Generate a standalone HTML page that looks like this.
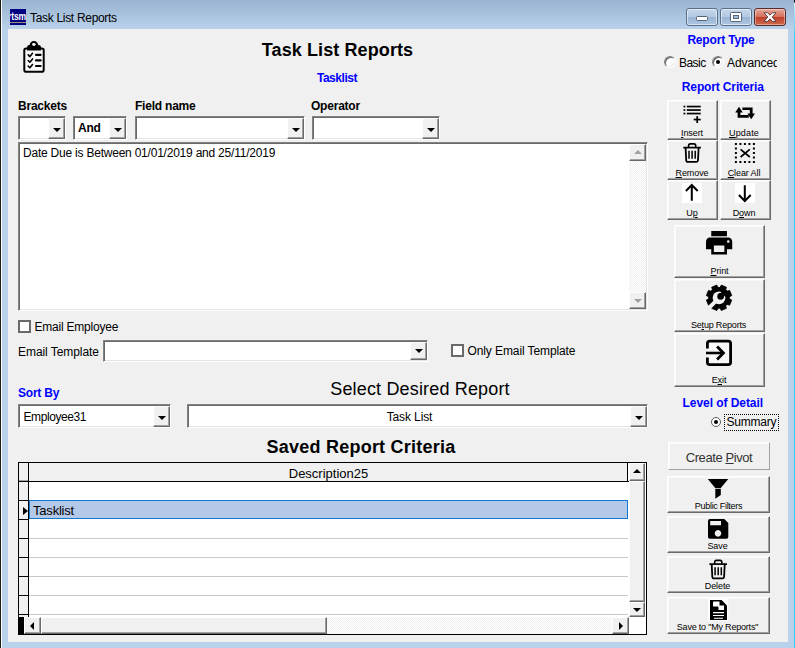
<!DOCTYPE html>
<html>
<head>
<meta charset="utf-8">
<title>Task List Reports</title>
<style>
html,body{margin:0;padding:0;}
body{width:795px;height:648px;overflow:hidden;position:relative;background:#b9d1ea;font-family:"Liberation Sans",sans-serif;font-size:12px;color:#000;}
.abs,.abs *{box-sizing:border-box;}
.abs{position:absolute;}
#frame{left:0;top:0;width:795px;height:648px;background:#b9d1ea;}
#titlebar{left:0;top:0;width:795px;height:29px;background:linear-gradient(to bottom,#99b4d1 0%,#b9d1ea 100%);}
#edgeL{left:0;top:0;width:1px;height:648px;background:#1a1a1a;}
#edgeL2{left:1px;top:0;width:1px;height:648px;background:#fff;}
#edgeR{left:794px;top:0;width:1px;height:648px;background:linear-gradient(to bottom,#000 0,#000 2px,#c8f6fd 3px,#7fe0f6 18px,#34cdf2 40px,#34cdf2 100%);}
#client{left:8px;top:29px;width:780px;height:613px;background:#f0f0f0;}
.lbl{white-space:nowrap;line-height:14px;letter-spacing:-0.22px;}
.b{font-weight:bold;}
.blue{color:#0000ff;}
.combo{background:#fff;border:1px solid;border-color:#828282 #fff #fff #828282;box-shadow:inset 1px 1px 0 #696969, inset -1px -1px 0 #e3e3e3;}
.cbtn{position:absolute;right:0;top:1px;bottom:0;width:17px;background:#f0f0f0;border:1px solid;border-color:#fff #696969 #696969 #fff;box-shadow:inset -1px -1px 0 #a0a0a0;}
.cbtn:after{content:"";position:absolute;left:50%;top:50%;margin:-1px 0 0 -4px;border:4px solid transparent;border-top-color:#000;border-bottom-width:0;width:0;height:0;}
.cbtn.e:after{margin-top:-2px;}
.btn{background:#f0f0f0;border:1px solid;border-color:#fff #696969 #696969 #fff;box-shadow:inset -1px -1px 0 #a0a0a0, inset 1px 1px 0 #f8f8f8;text-align:center;font-size:9px;}
.btn .t{position:absolute;left:0;right:0;bottom:0px;line-height:12px;white-space:nowrap;letter-spacing:-0.1px;}
.btn svg{position:absolute;}
u{text-decoration:underline;text-decoration-thickness:1px;text-underline-offset:1px;}
.chk{width:13px;height:13px;background:#fff;border:2px solid #6a6a6a;}
.radio{width:12px;height:12px;border-radius:50%;background:#fff;border:1px solid;border-color:#808080 #fff #fff #808080;box-shadow:inset 1px 1px 0 #606060, inset -1px -1px 0 #e8e8e8;}
.radio.on:after{content:"";position:absolute;left:3px;top:3px;width:4px;height:4px;border-radius:50%;background:#000;}
.sbtn{background:#f0f0f0;border:1px solid;border-color:#fff #696969 #696969 #fff;box-shadow:inset -1px -1px 0 #a0a0a0;}
.ar{position:absolute;left:50%;top:50%;width:0;height:0;border:4px solid transparent;}
.ar.up{margin:-3px 0 0 -4px;border-bottom-color:#000;border-top-width:0;}
.ar.dn{margin:-2px 0 0 -4px;border-top-color:#000;border-bottom-width:0;}
.ar.lf{margin:-4px 0 0 -3px;border-right-color:#000;border-left-width:0;}
.ar.rt{margin:-4px 0 0 -2px;border-left-color:#000;border-right-width:0;}
.ar.g.up{border-bottom-color:#a0a0a0;}
.ar.g.dn{border-top-color:#a0a0a0;}
</style>
</head>
<body>
<div class="abs" id="frame"></div>
<div class="abs" id="titlebar"></div>
<div class="abs" id="edgeL"></div>
<div class="abs" id="edgeL2"></div>
<div class="abs" id="edgeR"></div>
<!-- app icon -->
<div class="abs" style="left:10px;top:9px;width:16px;height:16px;background:#000080;overflow:hidden;">
  <div class="abs" style="left:-2px;top:2px;color:#fff;font-size:11px;font-weight:bold;line-height:11px;letter-spacing:-0.2px;transform:scaleX(0.78);transform-origin:0 0;white-space:nowrap;">rtsm!</div>
  <div class="abs" style="left:0;top:13px;width:16px;height:1px;background:#9a8f7a;"></div>
</div>
<div class="abs lbl" style="left:30px;top:10px;font-size:12px;line-height:16px;letter-spacing:-0.31px;">Task List Reports</div>
<!-- caption buttons -->
<div class="abs" id="bmin" style="left:686px;top:8px;width:32px;height:18px;border:1px solid #5a6f8c;border-radius:3px;background:linear-gradient(to bottom,#c5d6ea 0%,#b4c9e2 48%,#9ab5d5 52%,#adc5e0 100%);box-shadow:inset 0 0 0 1px rgba(255,255,255,.55);">
  <div class="abs" style="left:9px;top:7px;width:12px;height:5px;background:#fff;border:1px solid #56627a;border-radius:1.5px;"></div>
</div>
<div class="abs" id="bmax" style="left:720px;top:8px;width:32px;height:18px;border:1px solid #5a6f8c;border-radius:3px;background:linear-gradient(to bottom,#c5d6ea 0%,#b4c9e2 48%,#9ab5d5 52%,#adc5e0 100%);box-shadow:inset 0 0 0 1px rgba(255,255,255,.55);">
  <div class="abs" style="left:9px;top:3px;width:12px;height:10px;background:#fff;border:1px solid #56627a;border-radius:1.5px;"></div>
  <div class="abs" style="left:12px;top:6px;width:6px;height:4px;background:#a9bfdb;border:1px solid #56627a;"></div>
</div>
<div class="abs" id="bclose" style="left:754px;top:8px;width:32px;height:18px;border:1px solid #5b2a2a;border-radius:3px;background:linear-gradient(to bottom,#e5a898 0%,#d5705c 48%,#c0402a 52%,#cf6a4c 100%);box-shadow:inset 0 0 0 1px rgba(255,255,255,.4);">
  <svg class="abs" style="left:8px;top:3px" width="14" height="11" viewBox="0 0 14 11"><path d="M1 0.8 L4.6 0.8 L7 3.2 L9.4 0.8 L13 0.8 L9.2 5 L13 9.4 L9.4 9.4 L7 6.8 L4.6 9.4 L1 9.4 L4.8 5 Z" fill="#fff" stroke="#4e3838" stroke-width="0.9" stroke-linejoin="round"/></svg>
</div>

<div class="abs" id="client"></div>

<!-- ======= main left content ======= -->
<div class="abs lbl b" id="h1" style="letter-spacing:0.1px;left:137.5px;top:38px;width:400px;text-align:center;font-size:18px;line-height:24px;">Task List Reports</div>
<div class="abs lbl b blue" id="sub" style="letter-spacing:-0.45px;left:237px;top:71px;width:200px;text-align:center;">Tasklist</div>

<div class="abs lbl b" style="left:18px;top:99px;">Brackets</div>
<div class="abs lbl b" style="left:135px;top:99px;">Field name</div>
<div class="abs lbl b" style="left:311px;top:99px;">Operator</div>

<div class="abs combo" style="left:18px;top:116px;width:48px;height:24px;"><div class="cbtn"></div></div>
<div class="abs combo" style="left:73px;top:116px;width:54px;height:24px;"><div class="abs lbl b" style="left:4px;top:4px;">And</div><div class="cbtn"></div></div>
<div class="abs combo" style="left:135px;top:116px;width:170px;height:24px;"><div class="cbtn"></div></div>
<div class="abs combo" style="left:312px;top:116px;width:128px;height:24px;"><div class="cbtn"></div></div>

<!-- criteria list -->
<div class="abs combo" id="crit" style="left:18px;top:142px;width:630px;height:169px;">
  <div class="abs lbl" style="left:4px;top:3px;">Date Due is Between 01/01/2019 and 25/11/2019</div>
  <div class="abs" id="vs1" style="left:610px;top:1px;height:165px;width:17px;background:repeating-conic-gradient(#fff 0% 25%,#f0f0f0 0% 50%) 0 0/2px 2px;"></div>
  <div class="abs sbtn" style="left:610px;top:1px;width:17px;height:17px;"><i class="ar g up"></i></div>
  <div class="abs sbtn" style="left:610px;top:149px;width:17px;height:17px;"><i class="ar g dn"></i></div>
</div>

<div class="abs chk" style="left:18px;top:320px;"></div>
<div class="abs lbl" style="left:34.5px;top:320px;">Email Employee</div>
<div class="abs lbl" style="left:18px;top:345px;letter-spacing:-0.06px;">Email Template</div>
<div class="abs combo" style="left:103px;top:340px;width:325px;height:22px;"><div class="cbtn e" style="bottom:1px;"></div></div>
<div class="abs chk" style="left:451px;top:344px;"></div>
<div class="abs lbl" style="left:467.5px;top:344px;letter-spacing:-0.1px;">Only Email Template</div>

<div class="abs lbl b blue" style="left:18px;top:386px;">Sort By</div>
<div class="abs lbl" id="sdr" style="letter-spacing:0.16px;left:220px;top:377px;width:400px;text-align:center;font-size:18px;line-height:24px;">Select Desired Report</div>
<div class="abs combo" style="left:18px;top:404px;width:153px;height:24px;"><div class="abs lbl" style="left:4.5px;top:5px;letter-spacing:-0.42px;">Employee31</div><div class="cbtn"></div></div>
<div class="abs combo" style="left:187px;top:404px;width:461px;height:24px;"><div class="abs lbl" style="left:2px;right:18px;top:5px;text-align:center;letter-spacing:-0.12px;">Task List</div><div class="cbtn"></div></div>
<div class="abs lbl b" id="src" style="letter-spacing:0.23px;left:161px;top:435px;width:400px;text-align:center;font-size:18px;line-height:24px;">Saved Report Criteria</div>

<!-- grid -->
<div class="abs" id="grid" style="left:18px;top:462px;width:629px;height:173px;background:#fff;border:1px solid #000;overflow:hidden;">
  <!-- coordinates inside are relative to (19,463) -->
  <div class="abs" style="left:0;top:0;width:9px;height:154px;background:#f0f0f0;"></div>
  <div class="abs" style="left:9px;top:0;width:1px;height:154px;background:#000;"></div>
  <div class="abs" style="left:10px;top:0;width:599px;height:18px;background:#f0f0f0;border-right:1px solid #000;"></div>
  <div class="abs" style="left:0;top:17px;width:9px;height:1px;background:#a0a0a0;"></div>
  <div class="abs" style="left:0;top:18px;width:610px;height:1px;background:#000;"></div>
  <div class="abs lbl" style="left:10px;top:3px;width:599px;text-align:center;font-size:13px;line-height:15px;letter-spacing:0;">Description25</div>
  <!-- row header separators -->
  <div class="abs" style="left:0;top:37px;width:9px;height:1px;background:#000;"></div>
  <div class="abs" style="left:0;top:56px;width:9px;height:1px;background:#000;"></div>
  <div class="abs" style="left:0;top:75px;width:9px;height:1px;background:#000;"></div>
  <div class="abs" style="left:0;top:94px;width:9px;height:1px;background:#000;"></div>
  <div class="abs" style="left:0;top:113px;width:9px;height:1px;background:#000;"></div>
  <div class="abs" style="left:0;top:132px;width:9px;height:1px;background:#000;"></div>
  <div class="abs" style="left:0;top:151px;width:9px;height:1px;background:#000;"></div>
  <!-- grid lines -->
  <div class="abs" style="left:10px;top:75px;width:599px;height:1px;background:#c8c8c8;"></div>
  <div class="abs" style="left:10px;top:94px;width:599px;height:1px;background:#c8c8c8;"></div>
  <div class="abs" style="left:10px;top:113px;width:599px;height:1px;background:#c8c8c8;"></div>
  <div class="abs" style="left:10px;top:132px;width:599px;height:1px;background:#c8c8c8;"></div>
  <div class="abs" style="left:10px;top:151px;width:599px;height:1px;background:#c8c8c8;"></div>
  <!-- selected row -->
  <div class="abs" style="left:10px;top:37px;width:599px;height:19px;background:#b4c8e8;border:1px solid #1478d2;"></div>
  <div class="abs lbl" style="left:14px;top:40px;font-size:13px;line-height:15px;letter-spacing:-0.2px;">Tasklist</div>
  <div class="abs" style="left:4px;top:44px;width:0;height:0;border:4px solid transparent;border-left:5px solid #000;border-right-width:0;"></div>
  <!-- vertical scrollbar -->
  <div class="abs" style="left:610px;top:0;width:17px;height:154px;background:#f0f0f0;border-right:1px solid #fff;"></div>
  <div class="abs sbtn" style="left:610px;top:0;width:16px;height:18px;"><i class="ar up"></i></div>
  <div class="abs sbtn" style="left:610px;top:18px;width:16px;height:121px;"></div>
  <div class="abs sbtn" style="left:610px;top:139px;width:16px;height:15px;"><i class="ar dn"></i></div>
  <!-- horizontal scrollbar -->
  <div class="abs" style="left:0;top:154px;width:610px;height:17px;background:repeating-conic-gradient(#fff 0% 25%,#f0f0f0 0% 50%) 0 0/2px 2px;"></div>
  <div class="abs" style="left:0;top:154px;width:6px;height:17px;background:#000;"></div>
  <div class="abs sbtn" style="left:5px;top:154px;width:17px;height:17px;"><i class="ar lf"></i></div>
  <div class="abs sbtn" style="left:22px;top:154px;width:286px;height:17px;"></div>
  <div class="abs sbtn" style="left:593px;top:154px;width:17px;height:17px;"><i class="ar rt"></i></div>
</div>

<!-- ======= right panel ======= -->
<div class="abs lbl b blue" style="left:671px;top:33px;width:100px;text-align:center;letter-spacing:-0.17px;">Report Type</div>
<div class="abs radio" style="left:664px;top:56px;"></div>
<div class="abs lbl" style="left:679px;top:56px;letter-spacing:-0.55px;">Basic</div>
<div class="abs radio on" style="left:712px;top:56px;"></div>
<div class="abs lbl" style="left:727px;top:56px;width:49.5px;overflow:hidden;letter-spacing:-0.1px;">Advanced</div>
<div class="abs lbl b blue" style="left:662.8px;top:80px;width:120px;text-align:center;letter-spacing:-0.14px;">Report Criteria</div>

<div class="abs btn" style="left:667px;top:100px;width:51px;height:40px;"><div class="t" style="padding-right:1px;"><u>I</u>nsert</div></div>
<div class="abs btn" style="left:720px;top:100px;width:51px;height:40px;"><div class="t" style="padding-right:3px;letter-spacing:0.15px;"><u>U</u>pdate</div></div>
<div class="abs btn" style="left:667px;top:140px;width:51px;height:40px;"><div class="t" style="padding-right:1px;"><u>R</u>emove</div></div>
<div class="abs btn" style="left:720px;top:140px;width:51px;height:40px;"><div class="t" style="padding-right:3px;"><u>C</u>lear All</div></div>
<div class="abs btn" style="left:667px;top:180px;width:51px;height:40px;"><div class="t" style="padding-right:1px;">U<u>p</u></div></div>
<div class="abs btn" style="left:720px;top:180px;width:51px;height:40px;"><div class="t" style="padding-right:3px;">D<u>o</u>wn</div></div>

<div class="abs btn" style="left:674px;top:225px;width:91px;height:53px;"><div class="t"><u>P</u>rint</div></div>
<div class="abs btn" style="left:674px;top:279px;width:91px;height:53px;"><div class="t" style="padding-right:2px;letter-spacing:-0.18px;">Se<u>t</u>up Reports</div></div>
<div class="abs btn" style="left:674px;top:333px;width:91px;height:54px;"><div class="t" style="padding-right:1px;">E<u>x</u>it</div></div>

<div class="abs lbl b blue" style="left:660.8px;top:396px;width:124px;text-align:center;letter-spacing:-0.06px;">Level of Detail</div>
<div class="abs" style="left:711px;top:417px;width:10px;height:10px;border-radius:50%;background:#fff;border:1.5px solid #5c5c5c;"><div class="abs" style="left:1.5px;top:1.5px;width:4px;height:4px;border-radius:50%;background:#000;"></div></div>
<div class="abs lbl" style="left:724px;top:414px;width:55px;height:17px;border:1px dotted #000;padding:0 0 0 1.5px;line-height:15px;">Summary</div>

<div class="abs" style="left:668px;top:442px;width:102px;height:28px;background:#f0f0f0;border:1px solid;border-color:#fff #a0a0a0 #a0a0a0 #fff;box-shadow:inset 1px 1px 0 #fafafa;"><div class="abs lbl" style="left:0;right:0;top:7px;text-align:center;font-size:13px;line-height:16px;color:#333;letter-spacing:-0.42px;">Create <u>P</u>ivot</div></div>
<div class="abs btn" style="left:667px;top:476px;width:103px;height:37px;"><div class="t" style="letter-spacing:-0.3px;">Public Filters</div></div>
<div class="abs btn" style="left:667px;top:516px;width:103px;height:37px;"><div class="t" style="padding-right:2px;">Save</div></div>
<div class="abs btn" style="left:667px;top:556px;width:103px;height:37px;"><div class="t" style="padding-right:2px;">Delete</div></div>
<div class="abs btn" style="left:667px;top:597px;width:103px;height:37px;"><div class="t" style="letter-spacing:-0.2px;padding-right:2px;">Save to "My Reports"</div></div>
<!-- ======= icons overlay ======= -->
<svg class="abs" id="icons" style="left:0;top:0;pointer-events:none" width="795" height="648" viewBox="0 0 795 648">
  <!-- clipboard -->
  <rect x="24.3" y="48.4" width="19.4" height="23.3" rx="1.8" fill="#f9f9f9" stroke="#000" stroke-width="2"/>
  <circle cx="33.9" cy="45.1" r="3.1" fill="none" stroke="#000" stroke-width="2.2"/>
  <path d="M27.1 50.5 V47.2 Q27.1 44.9 29.4 44.9 H38.6 Q41 44.9 41 47.2 V50.5 Z" fill="#000"/>
  <path d="M31.2 46 A2.9 2.9 0 0 1 36.6 46 Z" fill="#000"/>
  <circle cx="33.9" cy="44.6" r="1.5" fill="#f0f0f0"/>
  <g fill="none" stroke="#000" stroke-linecap="round" stroke-linejoin="round">
    <path d="M28.2 54.9 L29.9 56.6 L32.5 53.3 M28.2 60.5 L29.9 62.2 L32.5 58.9 M28.2 66.1 L29.9 67.8 L32.5 64.5" stroke-width="1.6"/>
    <path d="M36 54.8 H40.6 M36 60.4 H40.6 M36 66 H40.6" stroke-width="2.2"/>
  </g>
  <!-- insert -->
  <g fill="#000">
    <rect x="683.5" y="105.7" width="1.8" height="1.7"/><rect x="686.8" y="105.7" width="13.9" height="1.7"/>
    <rect x="683.5" y="109.2" width="1.8" height="1.7"/><rect x="686.8" y="109.2" width="13.9" height="1.7"/>
    <rect x="683.5" y="112.7" width="1.8" height="1.7"/><rect x="686.8" y="112.7" width="13.9" height="1.7"/>
    <rect x="693.7" y="118.7" width="7" height="1.7"/><rect x="696.35" y="116.1" width="1.7" height="6.9"/>
  </g>
  <!-- update (retweet) -->
  <g fill="#000">
    <path d="M739 106.8 L742.8 112.4 L740.4 112.4 L740.4 115 L748.8 115 L748.8 117.7 L737.6 117.7 L737.6 112.4 L735.2 112.4 Z"/>
    <path d="M751.2 119.2 L747.4 113.6 L749.8 113.6 L749.8 110.1 L742.4 110.1 L742.4 107.4 L752.6 107.4 L752.6 113.6 L755 113.6 Z"/>
  </g>
  <!-- remove (trash) -->
  <g id="trash" fill="none" stroke="#000">
    <path d="M683.3 147.6 H700.9" stroke-width="1.7"/>
    <path d="M688.6 147.2 V145.6 Q688.6 143.9 690.3 143.9 H694 Q695.7 143.9 695.7 145.6 V147.2" stroke-width="1.6"/>
    <path d="M685.6 148 L686.2 160.2 Q686.3 161.9 688 161.9 H696.2 Q697.9 161.9 698 160.2 L698.6 148" stroke-width="1.8"/>
    <path d="M689 150.8 V158.8 M692.1 150.8 V158.8 M695.2 150.8 V158.8" stroke-width="1.5"/>
  </g>
  <!-- clear all -->
  <rect x="735.9" y="144.1" width="18" height="18" fill="none" stroke="#000" stroke-width="2" stroke-dasharray="2 2.5" stroke-dashoffset="1"/>
  <path d="M740.6 149.4 L749.8 157 M749.8 149.4 L740.6 157" stroke="#000" stroke-width="1.7" fill="none"/>
  <!-- up / down -->
  <rect x="682" y="183" width="20" height="20" fill="#fff"/>
  <path d="M691.8 200.8 V185.2 M685.9 191 L691.8 185 L697.7 191" fill="none" stroke="#000" stroke-width="2"/>
  <rect x="735" y="183" width="20" height="20" fill="#fff"/>
  <path d="M744.8 185.2 V200.8 M738.9 195 L744.8 201 L750.7 195" fill="none" stroke="#000" stroke-width="2"/>
  <!-- print -->
  <g transform="translate(703.4 227.1) scale(1.31)">
    <path fill="#000" fill-rule="evenodd" d="M19 8H5c-1.66 0-3 1.34-3 3v6h4v4h12v-4h4v-6c0-1.66-1.34-3-3-3zm-3 11H8v-5h8v5zm3-7c-.55 0-1-.45-1-1s.45-1 1-1 1 .45 1 1-.45 1-1 1zm-1-9H6v4h12V3z"/>
  </g>
  <!-- setup gear -->
  <path d="M719.94 287.64 L721.29 285.10 L726.45 287.23 L725.61 289.99 L726.86 291.24 L729.62 290.40 L731.75 295.56 L729.21 296.91 L729.21 298.69 L731.75 300.04 L729.62 305.20 L726.86 304.36 L725.61 305.61 L726.45 308.37 L721.29 310.50 L719.94 307.96 L718.16 307.96 L716.81 310.50 L711.65 308.37 L712.49 305.61 L711.24 304.36 L708.48 305.20 L706.35 300.04 L708.89 298.69 L708.89 296.91 L706.35 295.56 L708.48 290.40 L711.24 291.24 L712.49 289.99 L711.65 287.23 L716.81 285.10 L718.16 287.64 Z" fill="#000" stroke="#000" stroke-width="0.8" stroke-linejoin="round"/>
  <circle cx="719.05" cy="297.8" r="10.6" fill="#000"/>
  <circle cx="719.05" cy="297.8" r="6.4" fill="#f0f0f0"/>
  <path d="M718.5 298.3 L708.3 308.6" stroke="#f0f0f0" stroke-width="4" fill="none"/>
  <circle cx="720.6" cy="296.4" r="3.3" fill="#000"/>
  <path d="M720.6 296.4 L726.5 290.5" stroke="#000" stroke-width="5" fill="none"/>
  <!-- exit -->
  <rect x="708" y="342" width="22" height="22" fill="#f9f9f9"/>
  <path d="M707.4 348.4 V343.6 Q707.4 341.2 709.8 341.2 H728.2 Q730.6 341.2 730.6 343.6 V362.2 Q730.6 364.6 728.2 364.6 H709.8 Q707.4 364.6 707.4 362.2 V357.5" fill="none" stroke="#000" stroke-width="2.8"/>
  <path d="M706 353 H723" stroke="#000" stroke-width="2.6" fill="none"/>
  <path d="M717.1 346.6 L723.4 353 L717.1 359.4" stroke="#000" stroke-width="2.8" fill="none"/>
  <!-- filter -->
  <path d="M707.8 478.9 H728.3 L720.8 488 H715.2 Z" fill="#000"/>
  <path d="M715.3 488.8 H720.8 V495 L715.3 498.8 Z" fill="#000"/>
  <!-- save -->
  <path fill="#000" fill-rule="evenodd" d="M710 519.1 H724.3 L728.3 523.1 V537 Q728.3 538.8 726.5 538.8 H709.8 Q708 538.8 708 537 V521 Q708 519.1 710 519.1 Z M710.2 521.1 V525.3 H721 V521.1 Z M718 530.1 a3.3 3.3 0 1 0 0.01 0 Z"/>
  <!-- delete (trash) -->
  <g fill="none" stroke="#000" transform="translate(26.1 416.5)">
    <path d="M683.3 147.6 H700.9" stroke-width="1.7"/>
    <path d="M688.6 147.2 V145.6 Q688.6 143.9 690.3 143.9 H694 Q695.7 143.9 695.7 145.6 V147.2" stroke-width="1.6"/>
    <path d="M685.6 148 L686.2 160.2 Q686.3 161.9 688 161.9 H696.2 Q697.9 161.9 698 160.2 L698.6 148" stroke-width="1.8"/>
    <path d="M689 150.8 V158.8 M692.1 150.8 V158.8 M695.2 150.8 V158.8" stroke-width="1.5"/>
  </g>
  <!-- report -->
  <rect x="708.2" y="598.8" width="20" height="22" fill="#fff"/>
  <path d="M710 599.9 H721.6 L727 605.4 V619.9 H710 Z" fill="#000"/>
  <path d="M713 602.5 Q713 601.5 714 601.5 H719.5 V605.6 H724 V610 H718.5 V607.7 Q718.5 606.6 717.5 606.6 H713 Z" fill="#fff"/>
  <path d="M713 612.6 H724 M713 615.5 H724 M714 618.3 H723" stroke="#fff" stroke-width="1.1" fill="none"/>
</svg>
</body>
</html>
